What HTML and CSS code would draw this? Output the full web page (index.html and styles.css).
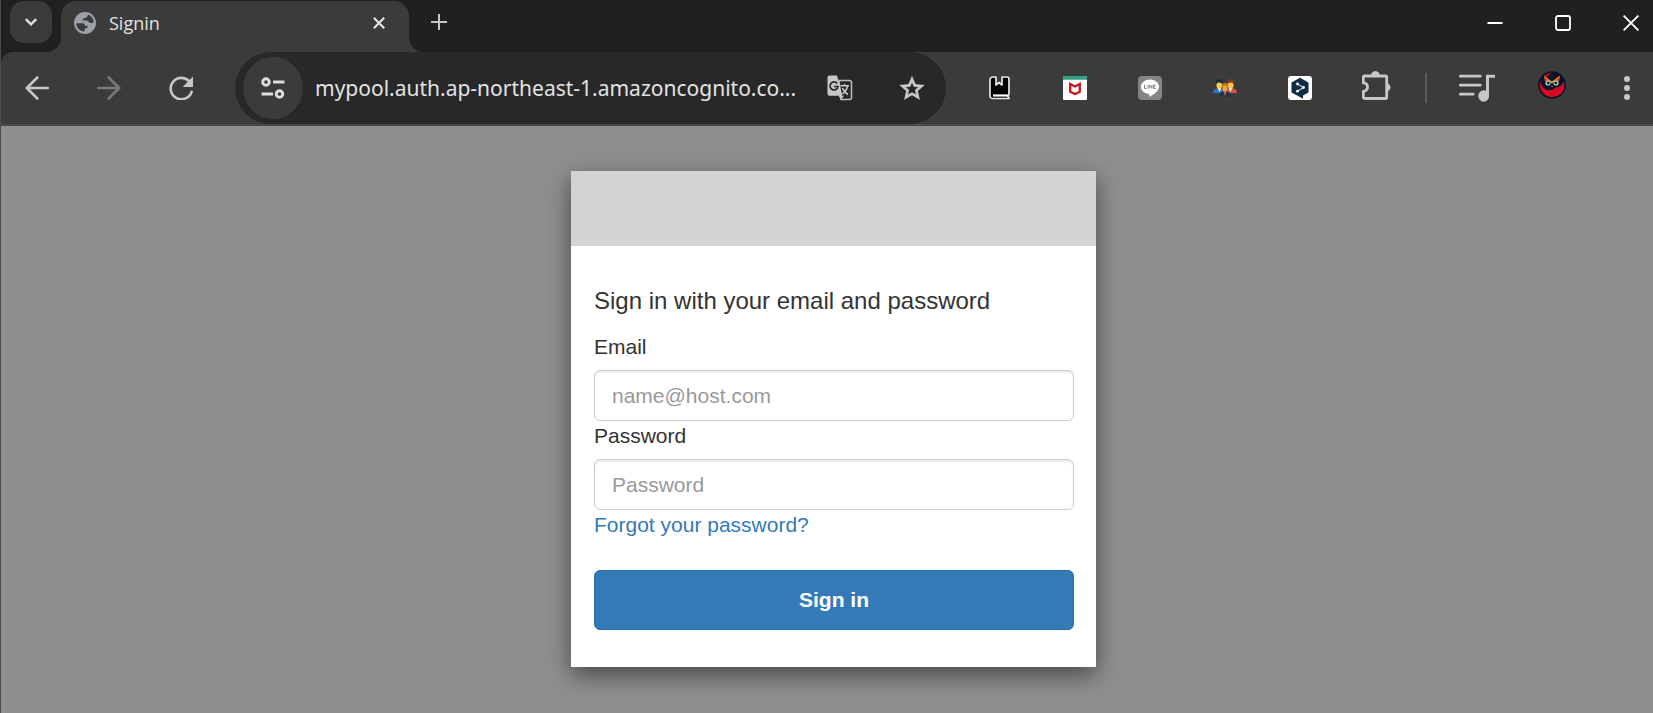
FILE: index.html
```html
<!DOCTYPE html>
<html lang="en">
<head>
<meta charset="utf-8">
<meta name="viewport" content="width=device-width, initial-scale=1">
<title>Signin</title>
<link rel="stylesheet" href="styles.css">
</head>
<body>
<div class="browser">
  <header class="chrome">
    <div class="tabstrip">
      <button class="tab-search" type="button" aria-label="Search tabs">
        <svg width="12" height="8" viewBox="0 0 12 8" fill="none" stroke="#e3e3e3" stroke-width="2.4"><path d="M.8 1.2 6 6.3l5.200-5.100"/></svg>
      </button>
      <div class="tab">
        <svg class="favicon" width="22" height="22" viewBox="0 0 22 22"><circle cx="11" cy="11" r="11" fill="#9aa0a6"/><path d="M13.800 2.600c3.200 1 5.500 4 5.900 7.400-.8 1.300-3.200 1.500-4.700.3-.8-.8-1-1.600-2.200-1.800H8.600c0-1.600.7-2.500 2.400-2.600 1.700-.1 2.700-1 2.800-3.300zM2.300 11.300h6.200c1.700 0 2.500.9 2.500 2.400h2.700c0 1.800-.8 2.500-2.200 2.600-.8.1-1 .6-1 3.300-4.700-.2-8.200-4-8.200-8.300z" fill="#3b3b3b"/></svg>
        <span class="tab-title">Signin</span>
        <button class="tab-close" type="button" aria-label="Close tab">
          <svg width="12" height="12" viewBox="0 0 12 12" stroke="#e3e3e3" stroke-width="2.200"><path d="m.8.8 10.400 10.400M11.200.8.8 11.200"/></svg>
        </button>
      </div>
      <button class="tab-new" type="button" aria-label="New tab">
        <svg width="16" height="16" viewBox="0 0 16 16" stroke="#c7c7c7" stroke-width="2"><path d="M8 0v16M0 8h16"/></svg>
      </button>
      <div class="window-controls">
        <button type="button" aria-label="Minimize"><svg width="16" height="16" viewBox="0 0 16 16"><path d="M.5 7h15v2H.5z" fill="#fff"/></svg></button>
        <button type="button" aria-label="Maximize"><svg width="16" height="16" viewBox="0 0 16 16" fill="none" stroke="#fff" stroke-width="1.800"><rect x="1" y="1" width="14" height="14" rx="2"/></svg></button>
        <button class="edge" type="button" aria-label="Close"><svg width="16" height="16" viewBox="0 0 16 16" stroke="#fff" stroke-width="1.800"><path d="m.6.6 14.800 14.800M15.400.6.6 15.400"/></svg></button>
      </div>
    </div>

    <div class="toolbar">
      <nav class="nav-buttons" aria-label="Navigation">
        <button type="button" aria-label="Back"><svg width="24" height="24" viewBox="0 0 24 24" fill="none" stroke="#c7c7c7" stroke-width="2.600" stroke-linecap="round"><path d="M22.700 12H2M12.300 1.500 1.800 12l10.500 10.500"/></svg></button>
        <button type="button" aria-label="Forward" disabled><svg width="24" height="24" viewBox="0 0 24 24" fill="none" stroke="#7a7a7a" stroke-width="2.600" stroke-linecap="round"><path d="M1.300 12H22M11.700 1.500 22.200 12 11.700 22.500"/></svg></button>
        <button type="button" aria-label="Reload"><svg width="24" height="24" viewBox="0 0 24 24"><path d="M22.600 15.800A10.700 10.700 0 1 1 20 5" fill="none" stroke="#c7c7c7" stroke-width="2.600" stroke-linecap="round"/><path d="M24 .6V11H13.700z" fill="#c7c7c7"/></svg></button>
      </nav>

      <div class="omnibox">
        <button class="site-info" type="button" aria-label="View site information">
          <svg width="24" height="22" viewBox="0 0 24 22" fill="none" stroke="#dedede" stroke-width="2.900"><circle cx="5" cy="5" r="3.300"/><path d="M12 5h11.500M.5 17H12"/><circle cx="18.500" cy="17" r="3.300"/></svg>
        </button>
        <input class="url" type="text" aria-label="Address" value="mypool.auth.ap-northeast-1.amazoncognito.co...">
        <button class="omni-action" type="button" aria-label="Translate this page">
          <svg width="26" height="26" viewBox="0 0 26 26"><path d="M12 5.500h10.500a2 2 0 0 1 2 2v15a2 2 0 0 1-2 2H14z" fill="none" stroke="#bdbdbd" stroke-width="1.500"/><path d="M2.500.5H10l5.500 20.300h-13a2 2 0 0 1-2-2V2.500a2 2 0 0 1 2-2z" fill="#c7c7c7"/><path d="m11.500 20.800 2.500 4 3-4z" fill="#c7c7c7"/><path d="M10.200 8.500A4 4 0 1 0 11 11.500H7" fill="none" stroke="#282828" stroke-width="1.700"/><path d="M13.500 10.800h8.500M17.500 9v2M20.500 11c-.6 3.500-2.500 6-5 8M15.500 13c1 3 3 5 5.500 6.500" fill="none" stroke="#c7c7c7" stroke-width="1.500"/></svg>
        </button>
        <button class="omni-action" type="button" aria-label="Bookmark this tab">
          <svg width="26" height="24" viewBox="0 0 26 24" fill="none" stroke="#c7c7c7" stroke-width="2.700"><path d="m13 3.200 2.700 6.200 6.800.7-5.100 4.500 1.500 6.600-5.900-3.500-5.900 3.500 1.500-6.600-5.100-4.500 6.800-.7z"/></svg>
        </button>
      </div>

      <div class="extensions">
        <button type="button" aria-label="Reading list"><svg width="22" height="24" viewBox="0 0 22 24"><path d="M4 1h3v8l3-2.500L13 9V1h5q2 0 2 2v15l-1 2.500 1 2H4q-3 0-3-3V4q0-3 3-3z" fill="#000" stroke="#e8e8e8" stroke-width="1.700" stroke-linejoin="round"/><path d="M4 19.500h15" stroke="#fff" stroke-width="2.200"/></svg></button>
        <button type="button" aria-label="McAfee"><svg width="24" height="24" viewBox="0 0 24 24"><rect width="24" height="24" rx="1" fill="#fff"/><path d="M1 0h22q1 0 1 1v2.700H0V1q0-1 1-1z" fill="#35a184"/><path d="m7.200 8 4.800 2.500L16.800 8v7.800L12 18l-4.800-2.200z" fill="none" stroke="#c8141d" stroke-width="2.300"/></svg></button>
        <button type="button" aria-label="LINE"><svg width="24" height="24" viewBox="0 0 24 24"><rect width="24" height="24" rx="4" fill="#858585"/><path d="M12 3.400c-5 0-9 3.300-9 7.300 0 3.700 3.300 6.600 7.500 7.200 1 .2.900.8.800 2.300 0 .4.300.6.700.3 3.600-2 9-5.500 9-9.800 0-4-4-7.300-9-7.300z" fill="#fff"/><path d="M6.500 8.800v3.700h2M10 8.800v3.700M11.700 12.500V9l2.300 3.400V8.800M17.700 9h-2v3.500h2M15.700 10.800h1.800" fill="none" stroke="#858585"/></svg></button>
        <button type="button" aria-label="Groups"><svg width="24" height="18" viewBox="0 0 24 18"><path d="M0 14q0-4 4-4.500h3q4 .5 4 4.500z" fill="#2877c9"/><path d="M13 14q0-4 4-4.500h3q4 .5 4 4.500z" fill="#df5140"/><path d="M4.500 9 6.500 13l2-4zM15.500 9l2 4 2-4z" fill="#eee"/><ellipse cx="6.300" cy="5.500" rx="2.900" ry="4.300" fill="#f8cb4c"/><ellipse cx="17.700" cy="5.500" rx="2.900" ry="4.300" fill="#f8cb4c"/><path d="M3 5.500Q2 .7 6 0q4.500.3 3.600 5.500Q8.500 3.500 6 3.500t-3 2z" fill="#172e40"/><path d="M14.400 5.500Q13.500.7 17.700 0q4.400.3 3.300 5.500-.8-2-3.300-2t-3.300 2z" fill="#8a3818"/><path d="M6 17q1-4.500 4.500-4.500h3Q17 12.500 18 17q-6 1.700-12 0z" fill="#18344c"/><path d="m10.500 13 1.500 4 1.500-4z" fill="#e35b4d"/><ellipse cx="12" cy="9" rx="2.700" ry="3.800" fill="#e8a93c"/><path d="M9 7.500Q8.500 4 12 3.700q3.500.3 3 3.800-3-2-6 0z" fill="#c26b26"/></svg></button>
        <button type="button" aria-label="DeepL"><svg width="24" height="24" viewBox="0 0 24 24"><rect width="24" height="24" rx="3" fill="#fff"/><path d="m12 1.800 8.500 4.700v10L15 19.600v3.200l-4.500-2.500L3.500 16.500v-10z" fill="#0f2b46"/><path d="m9.500 8 6 3.500-6 3.700" fill="none" stroke="#fff"/><circle cx="9.500" cy="8" r="1.400" fill="#fff"/><circle cx="15.500" cy="11.500" r="1.400" fill="#fff"/><circle cx="9.500" cy="15.200" r="1.400" fill="#fff"/></svg></button>
        <button class="ext-menu" type="button" aria-label="Extensions"><svg class="raised" width="30" height="30" viewBox="0 0 30 30"><path d="M2.500 5h21q1.200 0 1.200 1.200v20q0 1.300-1.200 1.300h-21q-1.200 0-1.200-1.300v-5.700q4.200-1 4.200-4.500t-4.200-4.300V6.200Q1.300 5 2.500 5z" fill="none" stroke="#c7c7c7" stroke-width="2.800"/><path d="M9.500 4.500a3.900 3.900 0 0 1 7.800 0zM25 12.500a3.900 3.900 0 0 1 0 7.600z" fill="#c7c7c7" stroke="#c7c7c7"/></svg></button>
        <span class="divider"></span>
        <button type="button" aria-label="Media controls"><svg width="36" height="28" viewBox="0 0 36 28"><path d="M1.300 2.200h20M1.300 11.200h20M1.300 20.200h13" fill="none" stroke="#c7c7c7" stroke-width="2.700" stroke-linecap="round"/><path d="M28.500 22V2.200H36" fill="none" stroke="#c7c7c7" stroke-width="3"/><ellipse cx="24.700" cy="22" rx="5.400" ry="5.800" fill="#c7c7c7"/></svg></button>
        <button type="button" aria-label="Profile"><svg class="avatar" width="28" height="28" viewBox="0 0 28 28"><circle cx="14" cy="14" r="13.800" fill="#0c1228"/><path d="M2.500 10C1 16 2.500 20 6 23c5 4.500 13 4 17.500-1 3-3.500 3.300-8 2.300-11.500-1.800 3.500-4 5.500-7.500 6-2 .5-2.800 2.500-6 2.800C7 19.700 3.500 16 2.500 10zM6.500 4.500Q10 1.500 14.500 2 10.500 3 9 6z" fill="#d70a26"/><path d="m6 4.500 6.500 5L14 11l1.500-1.500L22 4.500c.8 4.500.3 7.500-2 9.500q-2 1.300-4.500.5L14 16.500l-1.500-2q-2.500.8-4.500-.5c-2.300-2-2.800-5-2-9.500z" fill="#14162a"/><path d="m6 4.500 6 4.500 2 1.500L16 9l6-4.500-1 5.300-5.500 1.700-1.500 1-1.500-1L7 9.800z" fill="#f08324"/><path d="m7 7 3.500 2.500H8zM21 7l-3.500 2.500H20z" fill="#d70a26"/><circle cx="10" cy="12" r="2.600" fill="#8bd4b7"/><circle cx="18" cy="12" r="2.600" fill="#8bd4b7"/><circle cx="10.300" cy="12" r="1.300" fill="#07101c"/><circle cx="17.700" cy="12" r="1.300" fill="#07101c"/><path d="M13 15h2l-1 1.500z" fill="#f08324"/></svg></button>
        <button class="edge" type="button" aria-label="Menu"><svg width="6" height="24" viewBox="0 0 6 24" fill="#c7c7c7"><circle cx="3" cy="3" r="3"/><circle cx="3" cy="12" r="3"/><circle cx="3" cy="21" r="3"/></svg></button>
      </div>
    </div>
  </header>

  <main class="page">
    <section class="card">
      <div class="banner"></div>
      <form class="signin">
        <h1 class="heading">Sign in with your email and password</h1>
        <label class="label" for="email">Email</label>
        <input class="field" id="email" type="email" placeholder="name@host.com">
        <label class="label" for="password">Password</label>
        <input class="field" id="password" type="password" placeholder="Password">
        <a class="forgot" href="#">Forgot your password?</a>
        <button class="submit" type="button">Sign in</button>
      </form>
    </section>
  </main>
</div>
</body>
</html>
```
FILE: styles.css
```css
* { box-sizing: border-box; }

body {
  margin: 0;
  background: #8f8f8f;
  font-family: "Liberation Sans", Arial, sans-serif;
}

button {
  display: flex;
  align-items: center;
  justify-content: center;
  padding: 0;
  border: 0;
  background: none;
}

svg { display: block; flex: none; }

.browser {
  display: flex;
  flex-direction: column;
  min-height: 100vh;
  border-left: 1px solid #4a4a4a;
}

.chrome { background: #1f2120; }

.tabstrip {
  display: flex;
  align-items: flex-start;
  height: 52px;
  padding: 1px 0 0 9px;
}

.tab-search {
  width: 42px;
  height: 42px;
  border-radius: 14px;
  background: #3b3b3b;
}

.tab {
  position: relative;
  display: flex;
  align-items: center;
  width: 348px;
  height: 51px;
  margin-left: 9px;
  padding: 0 18px 8px 13px;
  border-radius: 15px 15px 0 0;
  background: #3b3b3b;
}

.tab::before,
.tab::after {
  content: "";
  position: absolute;
  bottom: 0;
  width: 15px;
  height: 15px;
}

.tab::before {
  right: 100%;
  background: radial-gradient(circle at 0 0, transparent 15px, #3b3b3b 15px);
}

.tab::after {
  left: 100%;
  background: radial-gradient(circle at 100% 0, transparent 15px, #3b3b3b 15px);
}

.tab-title {
  flex: 1;
  margin-left: 13px;
  color: #e3e3e3;
  font: 18px/24px "Open Sans", "Noto Sans", sans-serif;
}

.tab-close { width: 24px; height: 24px; }

.tab-new {
  width: 42px;
  height: 42px;
  margin-left: 9px;
}

.window-controls {
  display: flex;
  margin-left: auto;
}

.window-controls button { width: 68px; height: 44px; }

.window-controls .edge { width: 44px; margin-left: 12px; }

.toolbar {
  display: flex;
  align-items: center;
  border-bottom: 2px solid #474747;
  border-top-left-radius: 12px;
  background: #3b3b3b;
}

.nav-buttons { display: flex; }

.nav-buttons button { width: 72px; height: 72px; }

.omnibox {
  display: flex;
  flex: 1;
  align-items: center;
  min-width: 0;
  height: 72px;
  margin: 0 16px 0 18px;
  padding: 0 10px 0 8px;
  border-radius: 36px;
  background: #282828;
}

.site-info {
  flex: none;
  width: 60px;
  height: 62px;
  border-radius: 50%;
  background: #3b3b3b;
}

.url {
  flex: 1;
  min-width: 0;
  margin-left: 12px;
  padding: 0;
  border: 0;
  outline: 0;
  background: none;
  color: #e3e3e3;
  font: 21px/32px "Noto Sans", "Open Sans", sans-serif;
}

.omni-action { flex: none; width: 48px; height: 48px; }
.omni-action + .omni-action { margin-left: 24px; }

.extensions { display: flex; align-items: center; }

.extensions button { width: 75px; height: 72px; }

.extensions .ext-menu { padding-left: 4px; }

.extensions .edge { width: 52px; margin-left: 12px; }

.raised { margin-bottom: 4px; }

.avatar { margin-bottom: 6px; }

.divider {
  width: 2px;
  height: 30px;
  margin: 0 12px 0 13px;
  background: #5c5c5c;
}

.page {
  flex: 1;
  padding: 45px 0 45px 13px;
}

.card {
  max-width: 525px;
  margin: 0 auto;
  background: #fff;
  box-shadow: 0 8px 23px rgba(0, 0, 0, 0.5);
}

.banner { height: 75px; background: #d3d3d3; }

.signin {
  display: flex;
  flex-direction: column;
  padding: 38px 22px 37px 23px;
  color: #333;
  font-size: 21px;
  line-height: 30px;
}

.heading {
  margin: 0 0 14px;
  font-size: 24px;
  font-weight: 400;
  line-height: 34px;
}

.label { margin-bottom: 8px; }

.field {
  height: 51px;
  padding: 0 17px;
  border: 1px solid #ccc;
  border-radius: 6px;
  background: #fff;
  box-shadow: inset 0 2px 2px rgba(0, 0, 0, 0.075);
  color: #555;
  font: inherit;
}

.field::placeholder { color: #999; opacity: 1; }

.forgot {
  align-self: flex-start;
  color: #337ab7;
  text-decoration: none;
}

.submit {
  height: 60px;
  margin-top: 30px;
  border: 1px solid #2e6da4;
  border-radius: 6px;
  background: #337ab7;
  color: #fff;
  font: bold 21px/30px "Liberation Sans", Arial, sans-serif;
}
```
